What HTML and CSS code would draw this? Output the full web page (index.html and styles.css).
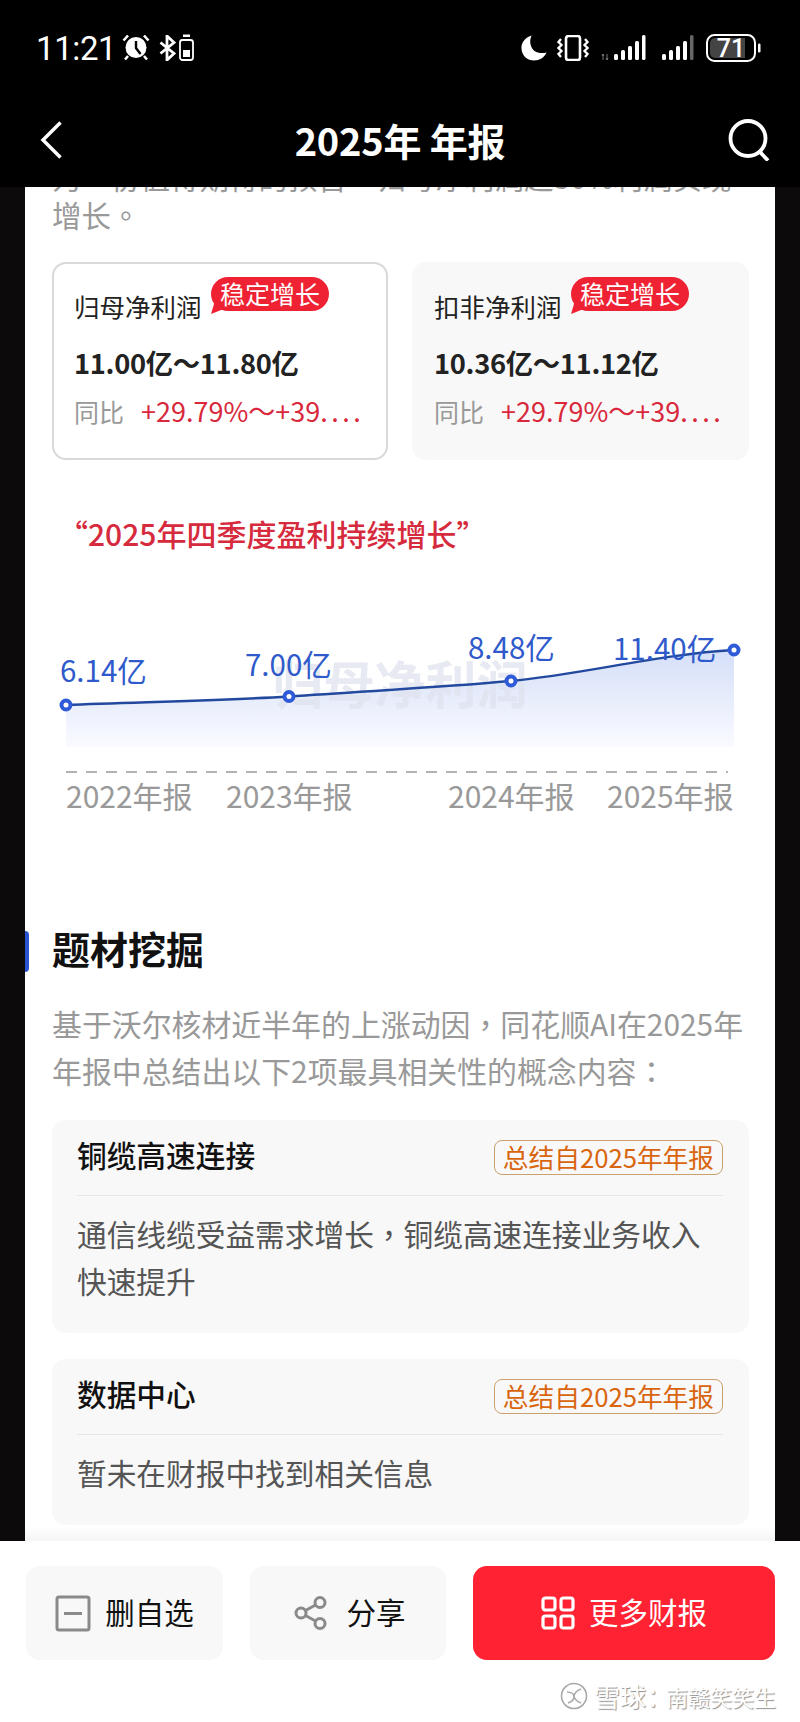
FILE: index.html
```html
<!DOCTYPE html>
<html lang="zh-CN">
<head>
  <meta charset="UTF-8">
  <title>2025年 年报</title>
  <meta name="viewport" content="width=device-width, initial-scale=1.0">
  <link rel="stylesheet" href="styles.css">
</head>
<body>

<header class="top">
  <div class="status">
    <div class="status-left">
      <span class="time">11:21</span>
      <!-- alarm -->
      <svg class="ic-alarm" width="28" height="26" viewBox="0 0 28 26">
        <circle cx="14" cy="13.5" r="10.5" fill="#fff"/>
        <path d="M14 7v7l4.5 6" fill="none" stroke="#000" stroke-width="2.4"/>
        <path d="M1.5 6.5 6 1.5M26.500 6.500 22 1.500M6 22l-3 3.500M22 22l3 3.500" stroke="#fff" stroke-width="2.600" fill="none"/>
      </svg>
      <!-- bluetooth -->
      <svg class="ic-bt" width="17" height="26" viewBox="0 0 17 26">
        <path d="M1.500 7.500 15 18.500 8 25V1l7 6.500L1.500 18.500" fill="none" stroke="#fff" stroke-width="2.800"/>
      </svg>
      <!-- earbud case battery -->
      <svg class="ic-case" width="15" height="27" viewBox="0 0 15 27">
        <rect x="1" y="6" width="13" height="20" rx="2.500" fill="none" stroke="#fff" stroke-width="1.800"/>
        <rect x="4" y="0.500" width="7" height="2.500" fill="#fff"/>
        <rect x="4" y="16" width="7" height="7" fill="#fff"/>
      </svg>
    </div>
    <div class="status-right">
      <!-- do not disturb -->
      <svg width="26" height="26" viewBox="0 0 26 26">
        <path d="M10.500 0.500C3.500 3 0 8 0.500 14c.6 7 6 11.500 12.500 11.500 5.500 0 10.500-3 12.500-8-8 2-13.500-1-15.500-6.500C8.800 7.500 9 4 10.500 0.500Z" fill="#fff"/>
      </svg>
      <!-- vibrate -->
      <svg width="32" height="26" viewBox="0 0 32 26">
        <rect x="9" y="1" width="14" height="24" rx="2.500" fill="none" stroke="#fff" stroke-width="2.600"/>
        <path d="M4 4 1.500 7 4.500 10 1.500 13 4.500 16 1.500 19 4 22M28 4l2.500 3-3 3 3 3-3 3 3 3-2.500 3" fill="none" stroke="#fff" stroke-width="2.300"/>
      </svg>
      <!-- signal, sim one -->
      <svg class="ic-sig1" width="45" height="26" viewBox="0 0 45 26">
        <path d="M2 25v-6M1 21l1-2 1 2M6 19v6M5 23l1 2 1-2" stroke="#777" stroke-width="1" fill="none"/>
        <g fill="#fff">
          <rect x="13" y="19" width="4" height="6" rx="1.500"/>
          <rect x="20" y="15" width="4" height="10" rx="1.500"/>
          <rect x="27" y="11" width="4" height="14" rx="1.500"/>
          <rect x="34" y="6" width="4" height="19" rx="1.500"/>
          <rect x="41" y="0" width="3.500" height="25" rx="1.500"/>
        </g>
      </svg>
      <!-- signal, sim two -->
      <svg class="ic-sig2" width="32" height="26" viewBox="0 0 32 26">
        <g fill="#fff">
          <rect x="0" y="19" width="4" height="6" rx="1.500"/>
          <rect x="7" y="15" width="4" height="10" rx="1.500"/>
          <rect x="14" y="11" width="4" height="14" rx="1.500"/>
          <rect x="21" y="6" width="4" height="19" rx="1.500"/>
        </g>
        <rect x="28" y="0" width="3.500" height="25" rx="1.500" fill="#666"/>
      </svg>
      <!-- battery -->
      <svg class="ic-battery" width="55" height="28" viewBox="0 0 55 28">
        <rect x="1" y="1" width="48" height="26" rx="7.500" fill="none" stroke="#fff" stroke-width="2"/>
        <path d="M9 4h30v20H9a5 5 0 0 1-5-5V9a5 5 0 0 1 5-5Z" fill="#444"/>
        <rect x="52" y="9.500" width="2.500" height="9" rx="1.200" fill="#fff"/>
        <text class="battery-num" x="25" y="23">71</text>
      </svg>
    </div>
  </div>

  <nav class="nav">
    <svg class="nav-back" width="42" height="42" viewBox="0 0 42 42">
      <path d="M30.500 3.500 13 21l17.500 17.500" fill="none" stroke="#fff" stroke-width="3.500"/>
    </svg>
    <div class="nav-title">2025年 年报</div>
    <svg class="nav-search" width="42" height="42" viewBox="0 0 42 42">
      <circle cx="20" cy="19.500" r="17.500" fill="none" stroke="#fff" stroke-width="3.800"/>
      <path d="m31 32 9 9.500" stroke="#fff" stroke-width="3.800" fill="none"/>
    </svg>
  </nav>
</header>

<main class="scroll">
  <div class="article">
    <p class="lead">为一份值得期待的预告<span class="punct" lang="zh-TW">，</span>归母净利润超30%利润实现增长<span class="punct" lang="zh-TW">。</span></p>

    <div class="profit-cards">
      <div class="profit-card active">
        <span class="badge">稳定增长</span>
        <div class="profit-name">归母净利润</div>
        <div class="profit-value">11.00亿～11.80亿</div>
        <div class="profit-yoy"><span class="yoy-label">同比</span><span class="yoy-num">+29.79%～+39<span class="dots">....</span></span></div>
      </div>
      <div class="profit-card">
        <span class="badge">稳定增长</span>
        <div class="profit-name">扣非净利润</div>
        <div class="profit-value">10.36亿～11.12亿</div>
        <div class="profit-yoy"><span class="yoy-label">同比</span><span class="yoy-num">+29.79%～+39<span class="dots">....</span></span></div>
      </div>
    </div>

    <div class="quote">“2025年四季度盈利持续增长”</div>

    <!-- 净利润走势 -->
    <svg class="chart" width="750" height="276" viewBox="0 0 750 276">
      <defs>
        <linearGradient id="areaFill" x1="0" y1="0" x2="0" y2="1">
          <stop offset="0" stop-color="#d5dff9"/>
          <stop offset="0.55" stop-color="#e9eefc"/>
          <stop offset="1" stop-color="#fafbff"/>
        </linearGradient>
      </defs>
      <path d="M41 151C115 148 190 147 264 142.500C338 137 412 134 486 127C560 120 635 100 709 96V193H41Z" fill="url(#areaFill)"/>
      <text class="chart-mark" x="375" y="150">归母净利润</text>
      <path class="chart-line" d="M41 151C115 148 190 147 264 142.500C338 137 412 134 486 127C560 120 635 100 709 96"/>
      <circle class="chart-dot" cx="41" cy="151" r="4.500"/>
      <circle class="chart-dot" cx="264" cy="142.500" r="4.500"/>
      <circle class="chart-dot" cx="486" cy="127" r="4.500"/>
      <circle class="chart-dot" cx="709" cy="96" r="4.500"/>
      <text class="chart-val" x="35" y="128">6.14亿</text>
      <text class="chart-val" x="220" y="122">7.00亿</text>
      <text class="chart-val" x="443" y="105">8.48亿</text>
      <text class="chart-val" x="588" y="106">11.40亿</text>
      <path class="chart-axis" d="M41 218H703"/>
      <text class="chart-year" x="41" y="254">2022年报</text>
      <text class="chart-year" x="201" y="254">2023年报</text>
      <text class="chart-year" x="423" y="254">2024年报</text>
      <text class="chart-year" x="582" y="254">2025年报</text>
    </svg>

    <h2 class="section-title">题材挖掘</h2>
    <p class="section-desc">基于沃尔核材近半年的上涨动因<span class="punct" lang="zh-TW">，</span>同花顺AI在2025年年报中总结出以下2项最具相关性的概念内容<span class="punct" lang="zh-TW">：</span></p>

    <div class="topic">
      <div class="topic-head">
        <span class="topic-name">铜缆高速连接</span>
        <span class="topic-tag">总结自2025年年报</span>
      </div>
      <p class="topic-body">通信线缆受益需求增长<span class="punct" lang="zh-TW">，</span>铜缆高速连接业务收入快速提升</p>
    </div>
    <div class="topic">
      <div class="topic-head">
        <span class="topic-name">数据中心</span>
        <span class="topic-tag">总结自2025年年报</span>
      </div>
      <p class="topic-body">暂未在财报中找到相关信息</p>
    </div>
  </div>
</main>

<footer class="bottom">
  <button class="btn">
    <svg width="36" height="37" viewBox="0 0 36 37">
      <rect x="2" y="2" width="32" height="33" rx="2" fill="none" stroke="#8a8a8a" stroke-width="3"/>
      <path d="M9 18.500H27" stroke="#8a8a8a" stroke-width="3"/>
    </svg>
    <span>删自选</span>
  </button>
  <button class="btn btn-share">
    <svg width="34" height="34" viewBox="0 0 34 34">
      <g fill="none" stroke="#8a8a8a" stroke-width="3">
        <circle cx="7" cy="17" r="5"/>
        <circle cx="26" cy="6.500" r="5"/>
        <circle cx="26" cy="27.500" r="5"/>
        <path d="m11.500 14.500 10-5.500M11.500 19.500l10 5.500"/>
      </g>
    </svg>
    <span>分享</span>
  </button>
  <button class="btn btn-red">
    <svg width="34" height="34" viewBox="0 0 34 34">
      <g fill="none" stroke="#fff" stroke-width="3.200">
        <rect x="2" y="2" width="12" height="12" rx="2.500"/>
        <rect x="20" y="2" width="12" height="12" rx="2.500"/>
        <rect x="2" y="20" width="12" height="12" rx="2.500"/>
        <rect x="20" y="20" width="12" height="12" rx="2.500"/>
      </g>
    </svg>
    <span>更多财报</span>
  </button>

  <div class="stamp">
    <svg width="28" height="28" viewBox="0 0 28 28">
      <g fill="none" stroke="#a8a8a8" stroke-width="1.600">
        <circle cx="14" cy="14" r="12.500"/>
        <path d="M7 10c4 0 7 2 7 5s-3 5-6 6M21 7c-3 1-7 4-7 7s4 6 7 7"/>
      </g>
    </svg>
    <span class="stamp-brand">雪球：</span><span class="stamp-name">南赣笑笑生</span>
  </div>
</footer>

</body>
</html>
```

FILE: styles.css
```css
* {
  box-sizing: border-box;
}

html, body {
  margin: 0;
  padding: 0;
}

body {
  width: 800px;
  height: 1722px;
  overflow: hidden;
  background-color: #0c0a0b;
  font-family: "Noto Sans CJK SC", "Noto Sans", sans-serif;
  display: flex;
  flex-direction: column;
}

p {
  margin: 0;
}

/* Centered full-width punctuation */
.punct {
  font-family: "Noto Sans CJK TC", sans-serif;
  line-height: 1;
}

/* Top black area */
.top {
  height: 187px;
  flex: none;
  background-color: #000;
  color: #fff;
}

.status {
  height: 99px;
  padding: 34px 39px 0 36px;
  display: flex;
  justify-content: space-between;
  align-items: flex-start;
}

.status-left,
.status-right {
  display: flex;
  align-items: flex-start;
}

.time {
  font-family: Roboto, sans-serif;
  font-size: 33px;
  line-height: 30px;
  letter-spacing: -0.4px;
  width: 87px;
}

.ic-alarm {
  margin-left: -1px;
}

.ic-bt {
  margin-left: 9px;
  margin-top: 1px;
}

.ic-case {
  margin-left: 3px;
}

.status-right {
  gap: 10px;
  padding-top: 1px;
}

.ic-sig1 {
  margin-left: 2px;
}

.ic-sig2 {
  margin-left: 6px;
}

.ic-battery {
  margin-left: 2px;
  margin-top: -1px;
}

.battery-num {
  font-family: Roboto, sans-serif;
  font-size: 25px;
  font-weight: 500;
  fill: #fff;
  text-anchor: middle;
}

.nav {
  display: flex;
  align-items: center;
  justify-content: space-between;
  padding: 0 30px;
  height: 82px;
}

.nav-title {
  font-size: 38px;
  font-weight: 700;
  line-height: 82px;
  letter-spacing: -0.2px;
}

/* Scrolled page column */
.scroll {
  position: relative;
  flex: none;
  width: 750px;
  height: 1354px;
  margin-left: 25px;
  background-color: #fff;
  overflow: hidden;
}

.scroll::after {
  content: "";
  position: absolute;
  left: 0;
  right: 0;
  bottom: 0;
  height: 12px;
  background: linear-gradient(#fdfdfd, #f5f5f5);
}

.article {
  margin-top: -30px;
}

.lead {
  margin: 0 27px;
  font-size: 29.5px;
  line-height: 38px;
  color: #999;
}

.profit-cards {
  display: grid;
  grid-template-columns: 336px 337px;
  gap: 24px;
  margin: 29px 26px 0 27px;
}

.profit-card {
  position: relative;
  height: 198px;
  padding: 24px 0 0 20px;
  background-color: #f8f8f8;
  border: 2px solid #f8f8f8;
  border-radius: 14px;
}

.profit-card.active {
  background-color: #fff;
  border-color: #d9d9d9;
}

.badge {
  position: absolute;
  left: 157px;
  top: 13px;
  height: 34px;
  padding: 0 9px;
  font-size: 25px;
  line-height: 32px;
  color: #fff;
  background-color: #ee2233;
  border-radius: 17px;
  white-space: nowrap;
}

.badge::after {
  content: "";
  position: absolute;
  left: 0;
  bottom: -3px;
  width: 14px;
  height: 14px;
  background-color: #ee2233;
  clip-path: polygon(0 100%, 30% 0, 100% 60%);
}

.profit-name {
  font-size: 25.5px;
  line-height: 36px;
  color: #222;
}

.profit-value {
  margin-top: 20px;
  font-size: 27.3px;
  line-height: 36px;
  font-weight: 700;
  color: #222;
  letter-spacing: -0.3px;
  white-space: nowrap;
}

.profit-yoy {
  display: flex;
  margin-top: 13px;
  font-size: 25px;
  line-height: 36px;
}

.yoy-label {
  color: #999;
  width: 67px;
  flex: none;
}

.yoy-num {
  color: #d9283c;
  font-size: 27px;
  white-space: nowrap;
}

.dots {
  letter-spacing: 3.5px;
}

.quote {
  margin: 53px 0 0 33px;
  font-size: 30px;
  line-height: 40px;
  font-weight: 500;
  color: #d62a3d;
}

.chart {
  display: block;
  margin-top: 1px;
}

.chart-mark {
  font-size: 51px;
  font-weight: 700;
  fill: #dfe3ee;
  opacity: 0.75;
  text-anchor: middle;
}

.chart-line {
  fill: none;
  stroke: #23499f;
  stroke-width: 2.500;
}

.chart-dot {
  fill: #fff;
  stroke: #2f5bd8;
  stroke-width: 4;
}

.chart-val {
  font-size: 29.5px;
  fill: #2f5acb;
}

.chart-axis {
  stroke: #999;
  stroke-width: 1.500;
  stroke-dasharray: 11 9;
}

.chart-year {
  font-size: 30px;
  fill: #999;
}

.section-title {
  position: relative;
  margin: 93px 0 0;
  padding-left: 27px;
  font-size: 38px;
  line-height: 50px;
  font-weight: 700;
  color: #111;
}

.section-title::before {
  content: "";
  position: absolute;
  left: 0;
  top: 8px;
  width: 4px;
  height: 41px;
  background-color: #2a55d0;
  border-radius: 0 4px 4px 0;
}

.section-desc {
  margin: 27px 27px 0;
  font-size: 29.9px;
  line-height: 47px;
  color: #999;
}

.topic {
  margin: 26px 26px 0 27px;
  padding: 0 26px 29px 25px;
  background-color: #f8f8f8;
  border-radius: 14px;
}

.section-desc + .topic {
  margin-top: 26px;
}

.topic + .topic {
  margin-top: 26px;
}

.topic-head {
  display: flex;
  align-items: center;
  justify-content: space-between;
  height: 76px;
  padding-top: 0;
  border-bottom: 1px solid #e6e6e6;
}

.topic-name {
  font-size: 29.7px;
  font-weight: 500;
  color: #111;
  line-height: 40px;
  margin-top: -5px;
}

.topic-tag {
  height: 35px;
  padding: 0 8px;
  margin-top: -1px;
  font-size: 25.7px;
  line-height: 32px;
  color: #d9650f;
  border: 1px solid #c9a06e;
  border-radius: 8px;
  white-space: nowrap;
}

.topic-body {
  padding-top: 14px;
  font-size: 29.7px;
  line-height: 47px;
  color: #555;
}

/* Fixed bottom bar */
.bottom {
  position: relative;
  flex: 1;
  background-color: #fff;
  padding: 25px 25px 0 26px;
  display: grid;
  grid-template-columns: 197px 196px 302px;
  grid-template-rows: 94px;
  gap: 27px;
}

.btn {
  display: flex;
  align-items: center;
  justify-content: center;
  gap: 14px;
  padding: 0;
  border: none;
  border-radius: 14px;
  background-color: #f8f8f8;
  font-family: inherit;
  font-size: 29.5px;
  color: #111;
}

.btn span {
  padding-bottom: 4px;
}

.btn-share {
  gap: 18px;
  padding-left: 4px;
}

.btn-red {
  background-color: #ff2233;
  color: #fff;
  gap: 14px;
}

.stamp {
  position: absolute;
  right: 24px;
  bottom: 11px;
  display: flex;
  align-items: center;
  color: #fff;
  line-height: 30px;
  text-shadow: 1px 1px 1px #8f8f8f;
}

.stamp svg {
  margin-right: 6px;
}

.stamp-brand {
  font-size: 26px;
  margin-right: -6px;
}

.stamp-name {
  font-size: 22px;
}
```
